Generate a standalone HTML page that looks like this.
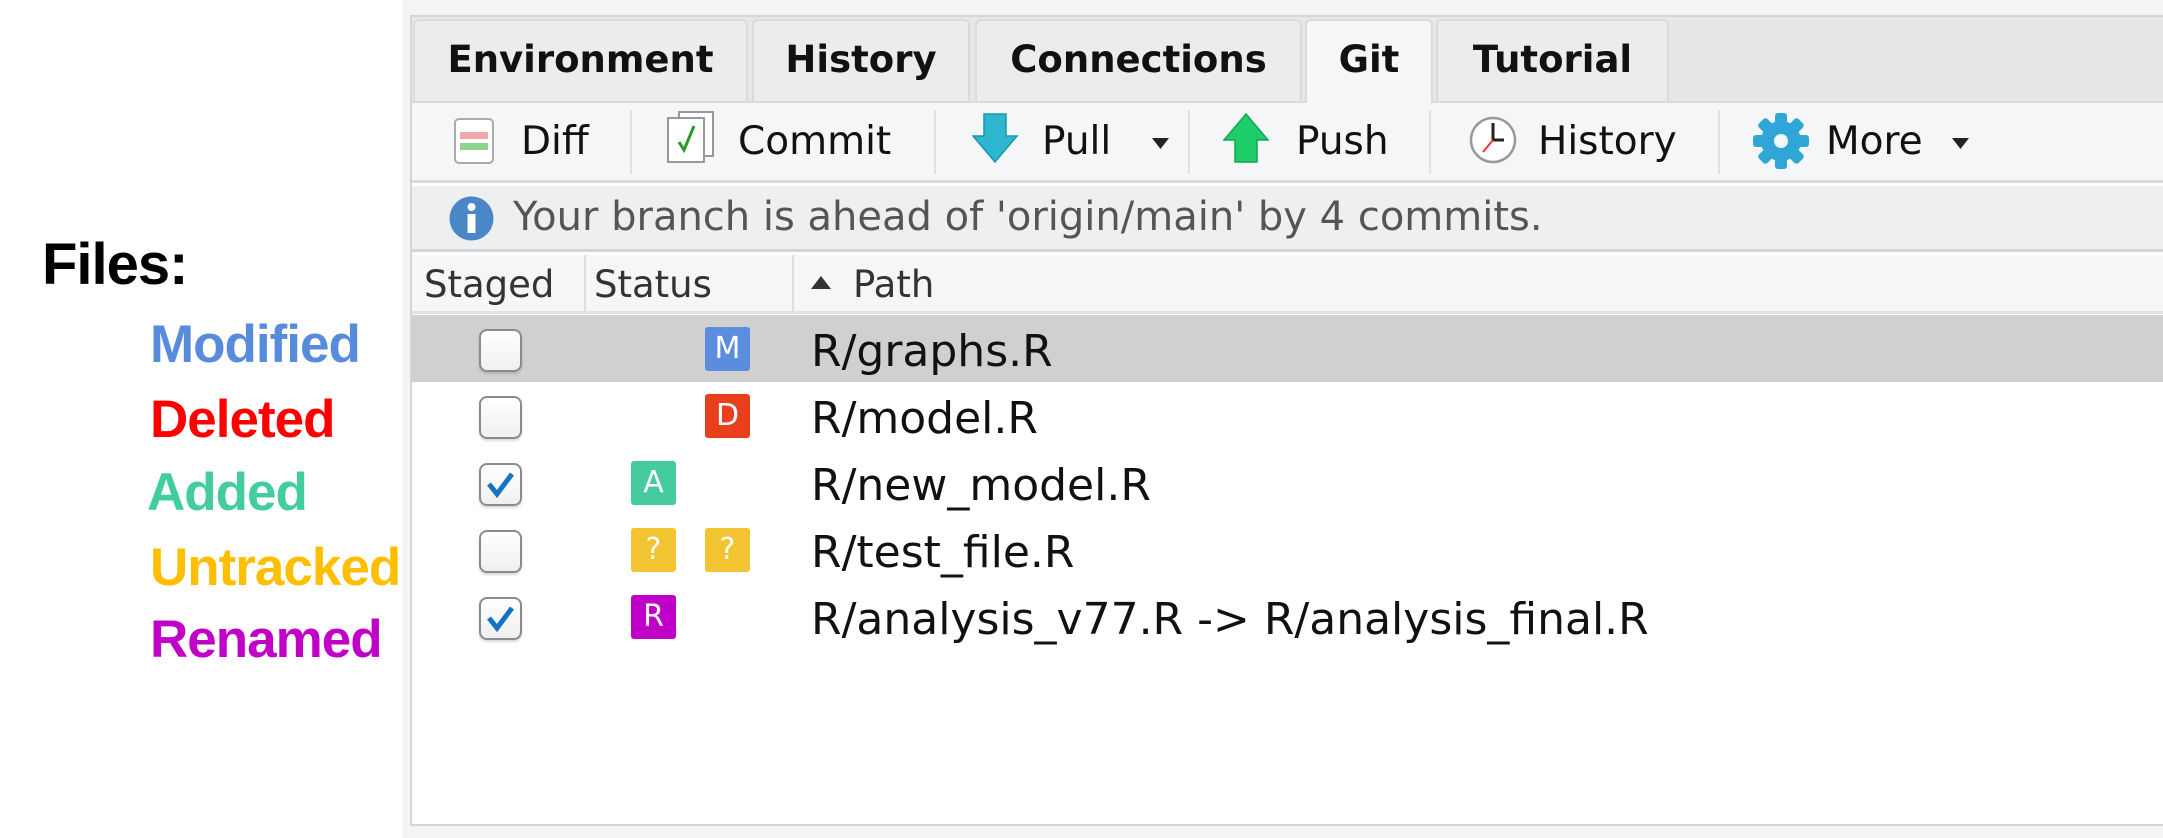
<!DOCTYPE html>
<html><head><meta charset="utf-8"><style>
*{margin:0;padding:0;box-sizing:border-box}
body{width:2163px;height:838px;background:#fff;position:relative;overflow:hidden;font-family:"DejaVu Sans","Liberation Sans",sans-serif}
.a{position:absolute}
.lg{position:absolute;font-family:"Liberation Sans",sans-serif;font-weight:bold;font-size:53px;line-height:1;letter-spacing:-1px}
.tab{position:absolute;top:19px;height:82px;background:#ececed;border:2px solid #d8dadc;border-bottom:none;border-radius:6px 6px 0 0;font-weight:bold;font-size:37px;color:#111;line-height:78px;text-align:center}
.tb{position:absolute;font-size:39px;color:#111;line-height:1;top:122px}
.sep{position:absolute;top:110px;width:2px;height:64px;background:#dfe1e3}
.hd{position:absolute;top:266px;font-size:37px;color:#333;line-height:1}
.cb{position:absolute;left:479px;width:43px;height:43px;border:2px solid #8b8b8b;border-radius:8px;background:linear-gradient(#fff,#f0f0f0);box-shadow:0 2px 2px rgba(0,0,0,.15)}
.bd{position:absolute;width:45px;height:44px;border-radius:3px;color:#fff;font-size:30px;text-align:center;line-height:44px}
.pt{position:absolute;left:811px;font-size:44px;color:#111;line-height:1}
</style></head><body>
<div class="lg" style="left:42px;top:236px;font-size:58px;color:#000">Files:</div>
<div class="lg" style="left:150px;top:318px;color:#588bdc">Modified</div>
<div class="lg" style="left:150px;top:393px;color:#ff0000">Deleted</div>
<div class="lg" style="left:147px;top:466px;color:#42cca0">Added</div>
<div class="lg" style="left:150px;top:541px;color:#ffbf00">Untracked</div>
<div class="lg" style="left:150px;top:613px;color:#c000c8">Renamed</div>

<div class="a" style="left:403px;top:0;width:1760px;height:838px;background:#f3f4f5"></div>
<div class="a" style="left:410px;top:15px;width:1760px;height:811px;background:#fff;border:2px solid #d3d5d7;border-right:none"></div>
<div class="a" style="left:412px;top:17px;width:1751px;height:85px;background:#e6e7e8"></div>
<div class="tab" style="left:413px;width:335px">Environment</div>
<div class="tab" style="left:752px;width:218px">History</div>
<div class="tab" style="left:975px;width:327px">Connections</div>
<div class="tab" style="left:1305px;width:128px;background:#f4f6f7;height:86px">Git</div>
<div class="tab" style="left:1436px;width:233px">Tutorial</div>
<div class="a" style="left:412px;top:101px;width:1751px;height:2px;background:#d8dadc"></div>
<div class="a" style="left:1307px;top:101px;width:124px;height:3px;background:#f4f6f7"></div>
<div class="a" style="left:412px;top:103px;width:1751px;height:80px;background:#f4f6f7;border-bottom:3px solid #d8dadc"></div>

<svg class="a" style="left:454px;top:118px" width="40" height="46"><rect x="1" y="1" width="38" height="44" rx="4" fill="#fff" stroke="#aaa" stroke-width="2"/><rect x="6" y="14" width="28" height="7" fill="#f2a8a8"/><rect x="6" y="25" width="28" height="7" fill="#8fd48f"/></svg>
<div class="tb" style="left:521px">Diff</div>
<div class="sep" style="left:630px"></div>
<svg class="a" style="left:665px;top:110px" width="52" height="54"><rect x="14" y="2" width="34" height="44" fill="#fff" stroke="#999" stroke-width="2"/><rect x="3" y="8" width="36" height="44" fill="#fff" stroke="#999" stroke-width="2"/><path d="M14 32 L19 40 L29 16" stroke="#2a9a2a" stroke-width="3" fill="none"/></svg>
<div class="tb" style="left:738px">Commit</div>
<div class="sep" style="left:934px"></div>
<svg class="a" style="left:971px;top:112px" width="48" height="52"><path d="M13 2 H35 V24 H46 L24 50 L2 24 H13 Z" fill="#2cb6cf" stroke="#1a95ae" stroke-width="1.5"/></svg>
<div class="tb" style="left:1042px">Pull</div>
<svg class="a" style="left:1152px;top:138px" width="18" height="12"><path d="M0 0 H17 L8.5 11Z" fill="#222"/></svg>
<div class="sep" style="left:1188px"></div>
<svg class="a" style="left:1222px;top:112px" width="48" height="52"><path d="M24 2 L46 28 H35 V50 H13 V28 H2 Z" fill="#1ecc6a" stroke="#12a550" stroke-width="1.5"/></svg>
<div class="tb" style="left:1296px">Push</div>
<div class="sep" style="left:1429px"></div>
<svg class="a" style="left:1468px;top:115px" width="50" height="50"><circle cx="25" cy="25" r="22" fill="#fff" stroke="#999" stroke-width="2.5"/><path d="M25 8 V25 H36" stroke="#222" stroke-width="3" fill="none"/><path d="M25 25 L15 37" stroke="#e33" stroke-width="2"/></svg>
<div class="tb" style="left:1538px">History</div>
<div class="sep" style="left:1718px"></div>
<svg class="a" style="left:1752px;top:112px" width="58" height="58" viewBox="-29 -29 58 58"><g fill="#2fa6d6"><circle r="20"/><rect x="-6" y="-28" width="12" height="56" rx="3"/><rect x="-6" y="-28" width="12" height="56" rx="3" transform="rotate(45)"/><rect x="-6" y="-28" width="12" height="56" rx="3" transform="rotate(90)"/><rect x="-6" y="-28" width="12" height="56" rx="3" transform="rotate(135)"/></g><circle r="7" fill="#f4f6f7"/></svg>
<div class="tb" style="left:1826px">More</div>
<svg class="a" style="left:1952px;top:138px" width="18" height="12"><path d="M0 0 H17 L8.5 11Z" fill="#222"/></svg>

<div class="a" style="left:412px;top:186px;width:1751px;height:66px;background:#eeeff0;border-bottom:3px solid #d3d5d7"></div>
<svg class="a" style="left:449px;top:196px" width="45" height="45"><circle cx="22.5" cy="22.5" r="22" fill="#4b86c6"/><circle cx="22.5" cy="11" r="4" fill="#fff"/><rect x="18.5" y="18" width="8" height="19" fill="#fff"/></svg>
<div class="a" style="left:513px;top:197px;font-size:40px;color:#555;line-height:1">Your branch is ahead of 'origin/main' by 4 commits.</div>

<div class="a" style="left:412px;top:255px;width:1751px;height:59px;background:#f4f6f7;border-bottom:3px solid #e0e2e4"></div>
<div class="a" style="left:584px;top:255px;width:2px;height:57px;background:#dcdee0"></div>
<div class="a" style="left:792px;top:255px;width:2px;height:57px;background:#dcdee0"></div>
<div class="hd" style="left:424px">Staged</div>
<div class="hd" style="left:594px">Status</div>
<svg class="a" style="left:811px;top:276px" width="20" height="14"><path d="M0 13 L10 0 L20 13Z" fill="#333"/></svg>
<div class="hd" style="left:853px">Path</div>

<div class="a" style="left:412px;top:315px;width:1751px;height:67px;background:#d0d0d0"></div>
<div class="cb" style="top:329px"></div>
<div class="bd" style="left:705px;top:327px;background:#5b8dde">M</div>
<div class="pt" style="top:330px">R/graphs.R</div>

<div class="cb" style="top:396px"></div>
<div class="bd" style="left:705px;top:394px;background:#e8401c">D</div>
<div class="pt" style="top:397px">R/model.R</div>

<div class="cb" style="top:463px"><svg width="39" height="39"><path d="M8 19 L16 29 L31 9" stroke="#1473c2" stroke-width="5" fill="none"/></svg></div>
<div class="bd" style="left:631px;top:461px;background:#45c99e">A</div>
<div class="pt" style="top:464px">R/new_model.R</div>

<div class="cb" style="top:530px"></div>
<div class="bd" style="left:631px;top:528px;background:#f2c431">?</div>
<div class="bd" style="left:705px;top:528px;background:#f2c431">?</div>
<div class="pt" style="top:531px">R/test_file.R</div>

<div class="cb" style="top:597px"><svg width="39" height="39"><path d="M8 19 L16 29 L31 9" stroke="#1473c2" stroke-width="5" fill="none"/></svg></div>
<div class="bd" style="left:631px;top:595px;background:#c000c8">R</div>
<div class="pt" style="top:598px">R/analysis_v77.R -&gt; R/analysis_final.R</div>
</body></html>
